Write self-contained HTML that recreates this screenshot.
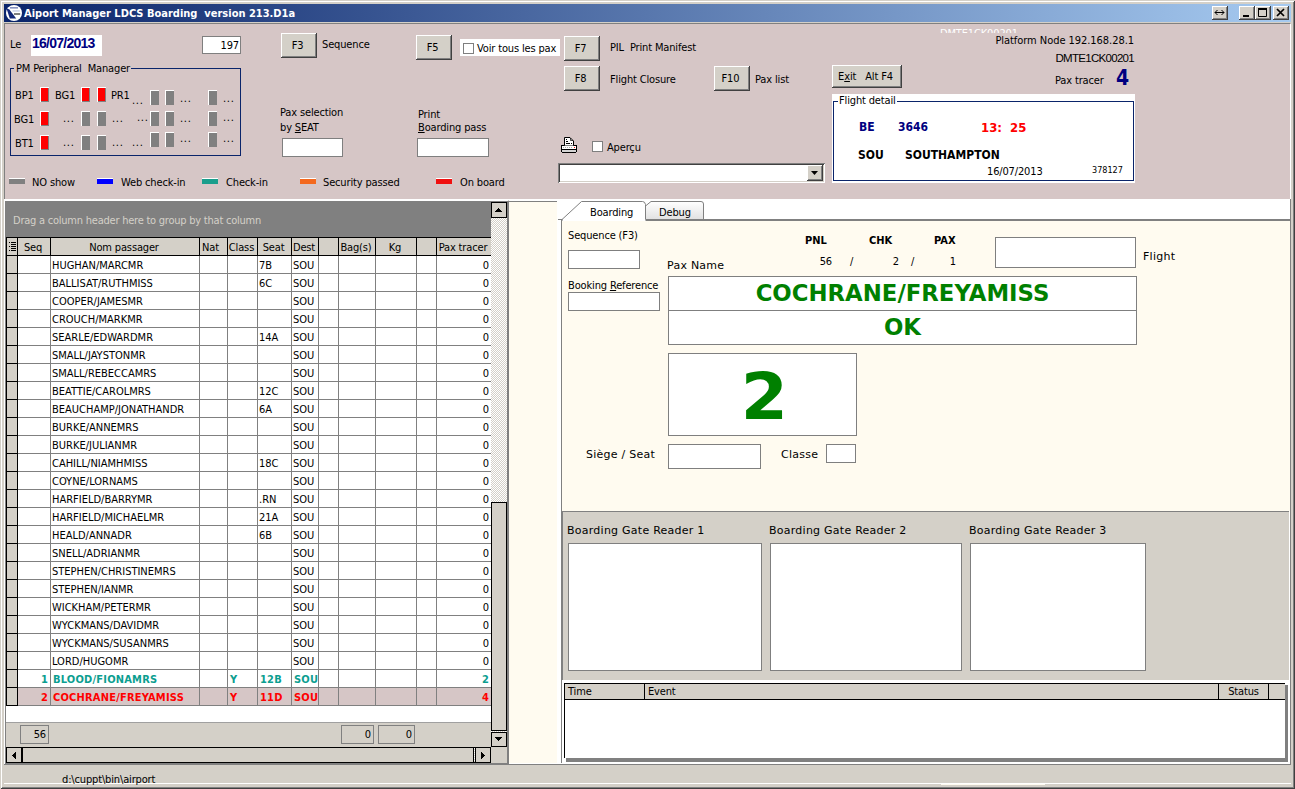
<!DOCTYPE html>
<html lang="fr">
<head>
<meta charset="utf-8">
<title>Aiport Manager LDCS Boarding version 213.D1a</title>
<style>
html,body{margin:0;padding:0;background:#d4d0c8}
#win{position:relative;width:1295px;height:789px;overflow:hidden;background:#d4d0c8;font:11px "DejaVu Sans Condensed","Liberation Sans",sans-serif;color:#000;letter-spacing:-0.15px;
 box-shadow:inset 1px 1px 0 #d4d0c8,inset -1px -1px 0 #404040,inset 2px 2px 0 #fff,inset -2px -2px 0 #808080}
#win div,#win span,#win i,#win b,#win svg{position:absolute;box-sizing:border-box;white-space:pre}
/* title bar */
#tb{left:4px;top:4px;width:1287px;height:18px;background:linear-gradient(90deg,#0a246a,#a6caf0)}
#tb .t{left:20px;top:3px;color:#fff;font:bold 11px "DejaVu Sans Condensed","Liberation Sans",sans-serif;letter-spacing:0}
.cb{top:2px;width:16px;height:14px;background:#d4d0c8;box-shadow:inset -1px -1px 0 #404040,inset 1px 1px 0 #fff,inset -2px -2px 0 #808080}
/* pink top panel */
#tp{left:4px;top:23px;width:1287px;height:177px;background:#d6c6c6;border:1px solid;border-color:#808080 #fff #fff #808080}
.btn{background:#d4d0c8;box-shadow:inset -1px -1px 0 #404040,inset 1px 1px 0 #fff,inset -2px -2px 0 #808080;text-align:center;padding:1px 3px 0 0}
.inp{background:#fff;border:1px solid #7f7f7f}
.lbl{line-height:13px}
u{text-decoration:underline}
.led{width:9px;height:15px;background:#808080;box-shadow:inset 1px 1px 0 #fff,inset -1px -1px 0 #808080}
.led.r{background:#f00}
.dots{line-height:13px;letter-spacing:0.7px}
.lg{width:16px;height:6px;box-shadow:inset 0 1px 0 #fff}
/* grid */
#grid{left:4px;top:199px;width:504px;height:565px;background:#fff}
#gp{left:5px;top:201px;width:486px;height:36px;background:#808080;color:#d4d0c8;padding:13px 0 0 8px;letter-spacing:-0.23px}
.hc{top:237px;height:19px;background:#d4d0c8;border-top:1px solid #000;border-bottom:1px solid #000;border-right:1px solid #000;text-align:center;line-height:17px;padding:1px 2px 0 0}
.hc.first{border-left:1px solid #000}
.hc.last{border-right:0}
.row{left:6px;width:485px;height:18px}
.row .c{top:0;height:18px;border-right:1px solid #808080;border-bottom:1px solid #808080;line-height:17px;padding:1px 0 0 1px;overflow:hidden;letter-spacing:0}
.row .c.r{text-align:right;padding:1px 2px 0 0}
.row .c.nl{border-right:0}
.row .ind{top:-1px;height:19px;background:#d4d0c8;border:1px solid #000}
.row.teal .c{color:#0c9e90;font-weight:bold;letter-spacing:0.2px;padding-left:2px}
.row.red .c{color:#f00;font-weight:bold;background:#d6c6c6;letter-spacing:0.2px;padding-left:2px}
.ft{height:19px;border:1px solid #808080;background:#d4d0c8;text-align:right;line-height:18px;padding-right:2px}
.trk{background:#e9e7e3 conic-gradient(#fff 25%,#d4d0c8 0 50%,#fff 0 75%,#d4d0c8 0) 0 0/2px 2px}
.sb{background:#d4d0c8;border:1px solid #000}
.vd{font:11px "DejaVu Sans","Liberation Sans",sans-serif;letter-spacing:0.25px;line-height:13px;margin-top:1px}
.big{color:#008000;font:bold 22.8px "DejaVu Sans","Liberation Sans",sans-serif;text-align:center;letter-spacing:0}
.lh{top:684px;height:16px;background:#d4d0c8;border-right:1px solid #000;border-bottom:1px solid #000;line-height:16px;padding-left:3px}

</style>
</head>
<body>
<div id="win">
<!-- title bar -->
<div id="tb">
<svg width="16" height="16" viewBox="0 0 16 16" style="left:2px;top:1px"><circle cx="8" cy="8" r="8" fill="#fff"/><path d="M0.600 3.800L3.200 4.300L10.200 13.600L3.800 13.400Z" fill="#14287a"/><rect x="4" y="2.200" width="8" height="1.300" fill="#6a78b0"/><rect x="6.500" y="5.300" width="7.300" height="1.300" fill="#c4cbe4"/><rect x="8" y="8.200" width="6.200" height="1.600" fill="#606060"/></svg>
<span class="t">Aiport Manager LDCS Boarding  version 213.D1a</span>
<div class="cb" style="left:1208px"><svg width="16" height="14" viewBox="0 0 16 14" style="left:0;top:0"><path d="M3 6.5h9M3 6.5l2.5-2.5M3 6.5l2.5 2.5M12 6.5l-2.5-2.5M12 6.5l-2.5 2.5" stroke="#000" stroke-width="1" fill="none"/></svg></div>
<div class="cb" style="left:1235px"><svg width="16" height="14" viewBox="0 0 16 14" style="left:0;top:0"><rect x="4" y="9" width="6" height="2" fill="#000"/></svg></div>
<div class="cb" style="left:1251px"><svg width="16" height="14" viewBox="0 0 16 14" style="left:0;top:0"><path d="M3.500 2.500h8v8h-8z" stroke="#000" stroke-width="1" fill="none"/><rect x="3" y="2" width="9" height="2" fill="#000"/></svg></div>
<div class="cb" style="left:1269px"><svg width="16" height="14" viewBox="0 0 16 14" style="left:0;top:0"><path d="M4 3l7 7M11 3l-7 7" stroke="#000" stroke-width="1.7" fill="none"/></svg></div>
</div>
<!-- top pink panel -->
<div id="tp"></div>
<span class="lbl" style="left:10px;top:38px">Le</span>
<div style="left:31px;top:35px;width:71px;height:21px;background:#fff;color:#000080;font:bold 14px 'Liberation Sans',sans-serif;letter-spacing:-0.75px;line-height:16px;padding-left:1px">16/07/2013</div>
<div class="inp" style="left:202px;top:36px;width:39px;height:18px;text-align:right;line-height:17px;padding-right:1px">197</div>
<div class="btn" style="left:281px;top:33px;width:36px;height:25px;line-height:23px">F3</div>
<span class="lbl" style="left:322px;top:38px">Sequence</span>
<div class="btn" style="left:416px;top:35px;width:36px;height:25px;line-height:23px">F5</div>
<div style="left:460px;top:39px;width:100px;height:17px;background:#fff"><i style="left:3px;top:4px;width:11px;height:11px;border:1px solid #7f7f7f;background:#fff"></i><span style="left:17px;top:3px" class="lbl">Voir tous les pax</span></div>
<div class="btn" style="left:564px;top:36px;width:36px;height:25px;line-height:23px">F7</div>
<span class="lbl" style="left:610px;top:41px">PIL  Print Manifest</span>
<div class="btn" style="left:564px;top:66px;width:36px;height:25px;line-height:23px">F8</div>
<span class="lbl" style="left:610px;top:73px">Flight Closure</span>
<div class="btn" style="left:714px;top:66px;width:36px;height:25px;line-height:23px">F10</div>
<span class="lbl" style="left:755px;top:73px">Pax list</span>
<div class="btn" style="left:832px;top:65px;width:70px;height:23px;line-height:21px">E<u>x</u>it   Alt F4</div>
<span class="lbl" style="left:940px;top:24px;height:9px;overflow:hidden;color:#fff;width:90px"><span style="top:3px;left:0">DMTE1CK00201</span></span>
<span class="lbl" style="right:161px;top:34px;letter-spacing:-0.05px">Platform Node 192.168.28.1</span>
<span class="lbl" style="right:161px;top:52px;font:11.5px 'Liberation Sans',sans-serif;letter-spacing:-0.7px">DMTE1CK00201</span>
<span class="lbl" style="left:1055px;top:74px">Pax tracer</span>
<span style="left:1116px;top:66px;font:bold 21px 'DejaVu Sans Condensed',sans-serif;color:#000080;letter-spacing:0">4</span>
<!-- PM Peripheral Manager group -->
<div style="left:10px;top:68px;width:231px;height:88px;border:1px solid #0a246a"></div>
<span class="lbl" style="left:14px;top:62px;background:#d6c6c6;padding:0 1px 0 2px">PM Peripheral  Manager</span>
<span class="lbl" style="left:15px;top:89px">BP1</span>
<i class="led r" style="left:40px;top:87px"></i>
<span class="lbl" style="left:55px;top:89px">BG1</span>
<i class="led r" style="left:81px;top:87px"></i>
<i class="led r" style="left:97px;top:87px"></i>
<span class="lbl" style="left:111px;top:89px">PR1</span>
<span class="lbl" style="left:14px;top:113px">BG1</span>
<i class="led r" style="left:40px;top:111px"></i>
<span class="dots" style="left:63px;top:112px">...</span>
<i class="led" style="left:81px;top:111px"></i>
<i class="led" style="left:97px;top:111px"></i>
<span class="dots" style="left:112px;top:112px">...</span>
<span class="lbl" style="left:15px;top:137px">BT1</span>
<i class="led r" style="left:40px;top:135px"></i>
<span class="dots" style="left:63px;top:136px">...</span>
<i class="led" style="left:81px;top:135px"></i>
<i class="led" style="left:97px;top:135px"></i>
<span class="dots" style="left:112px;top:136px">...</span>
<span class="dots" style="left:132px;top:94px">...</span>
<i class="led" style="left:150px;top:90px"></i>
<i class="led" style="left:165px;top:90px"></i>
<span class="dots" style="left:180px;top:92px">...</span>
<i class="led" style="left:208px;top:90px"></i>
<span class="dots" style="left:223px;top:92px">...</span>
<span class="dots" style="left:137px;top:111px">...</span>
<i class="led" style="left:150px;top:111px"></i>
<i class="led" style="left:165px;top:111px"></i>
<span class="dots" style="left:180px;top:112px">...</span>
<i class="led" style="left:208px;top:111px"></i>
<span class="dots" style="left:223px;top:111px">...</span>
<span class="dots" style="left:132px;top:136px">...</span>
<i class="led" style="left:150px;top:132px"></i>
<i class="led" style="left:165px;top:132px"></i>
<span class="dots" style="left:180px;top:132px">...</span>
<i class="led" style="left:208px;top:132px"></i>
<span class="dots" style="left:223px;top:132px">...</span>
<!-- selectors -->
<span class="lbl" style="left:280px;top:106px">Pax selection</span>
<span class="lbl" style="left:280px;top:121px">by <u>S</u>EAT</span>
<div class="inp" style="left:282px;top:138px;width:61px;height:19px"></div>
<span class="lbl" style="left:418px;top:108px">Print</span>
<span class="lbl" style="left:418px;top:121px"><u>B</u>oarding pass</span>
<div class="inp" style="left:417px;top:138px;width:72px;height:19px"></div>
<svg width="16" height="16" viewBox="0 0 16 16" style="left:561px;top:137px"><rect x="0" y="8" width="16" height="7" fill="#000"/><rect x="1" y="9" width="14" height="3" fill="#fff"/><rect x="1" y="13" width="14" height="2" fill="#d4d4d4"/><rect x="1" y="15" width="14" height="1" fill="#000"/><path d="M2 10.500h10" stroke="#b0b0b0" stroke-dasharray="1 1"/><rect x="13" y="10" width="1" height="1" fill="#f00"/><path d="M3.500 8.500V0.500H9L12.500 4V8.500" fill="#fff" stroke="#000"/><path d="M9.500 1V3.500H12" fill="none" stroke="#000" stroke-width="0.700"/><path d="M5 2.500h1M5 4.500h2M5 6.500h4M10 6.500h1" stroke="#000"/></svg>
<i style="left:592px;top:141px;width:11px;height:11px;border:1px solid #7f7f7f;background:#fff"></i>
<span class="lbl" style="left:607px;top:141px">Aperçu</span>
<div style="left:558px;top:163px;width:267px;height:20px;background:#fff;box-shadow:inset 1px 1px 0 #808080,inset -1px -1px 0 #fff,inset 2px 2px 0 #404040,inset -2px -2px 0 #d4d0c8"><div class="btn" style="left:249px;top:2px;width:16px;height:16px"><svg width="16" height="16" viewBox="0 0 16 16" style="left:0;top:0"><path d="M4 6h7l-3.5 4z" fill="#000"/></svg></div></div>
<!-- legend -->
<i class="lg" style="left:9px;top:178px;background:#808080"></i><span class="lbl" style="left:32px;top:176px">NO show</span>
<i class="lg" style="left:97px;top:178px;background:#0000ff"></i><span class="lbl" style="left:121px;top:176px">Web check-in</span>
<i class="lg" style="left:202px;top:178px;background:#1a9e8c"></i><span class="lbl" style="left:226px;top:176px">Check-in</span>
<i class="lg" style="left:300px;top:178px;background:#f4691e"></i><span class="lbl" style="left:323px;top:176px">Security passed</span>
<i class="lg" style="left:436px;top:178px;background:#f01010"></i><span class="lbl" style="left:460px;top:176px">On board</span>
<!-- flight detail -->
<div style="left:832px;top:94px;width:303px;height:89px;background:#fff"></div>
<div style="left:833px;top:101px;width:301px;height:80px;border:1px solid #0a246a"></div>
<span class="lbl" style="left:838px;top:94px;background:#fff;padding:0 1px">Flight detail</span>
<b style="left:859px;top:120px;color:#000080;font-size:12px;letter-spacing:0">BE</b>
<b style="left:898px;top:120px;color:#000080;font-size:12px;letter-spacing:0">3646</b>
<b style="left:981px;top:120px;color:#f00;font-size:13px;letter-spacing:0">13:  25</b>
<b style="left:858px;top:148px;font-size:12px;letter-spacing:0">SOU</b>
<b style="left:905px;top:148px;font-size:12px;letter-spacing:0">SOUTHAMPTON</b>
<span class="lbl" style="left:987px;top:165px">16/07/2013</span>
<span class="lbl" style="left:1092px;top:164px;font-size:9px;letter-spacing:0">378127</span>

<!-- passenger grid -->
<div id="grid"></div>
<div id="gp">Drag a column header here to group by that column</div>
<div class="hc first" style="left:6px;width:12px"><svg width="7" height="9" viewBox="0 0 7 9" style="left:2px;top:4px"><path d="M0 0h1v1H0zM0 4h1v1H0zM0 8h1v1H0zM2 0h5v1H2zM2 2h5v1H2zM2 4h5v1H2zM2 6h5v1H2zM2 8h5v1H2z" fill="#000"/></svg></div>
<div class="hc" style="left:18px;width:33px">Seq</div>
<div class="hc" style="left:51px;width:149px">Nom passager</div>
<div class="hc" style="left:200px;width:28px;text-align:left;padding-left:2px">Nat</div>
<div class="hc" style="left:228px;width:30px">Class</div>
<div class="hc" style="left:258px;width:34px">Seat</div>
<div class="hc" style="left:292px;width:27px">Dest</div>
<div class="hc" style="left:319px;width:20px"></div>
<div class="hc" style="left:339px;width:37px">Bag(s)</div>
<div class="hc" style="left:376px;width:41px">Kg</div>
<div class="hc" style="left:417px;width:20px"></div>
<div class="hc last" style="left:437px;width:54px">Pax tracer</div>
<div class="row" style="top:256px">
<i class="ind" style="left:0px;width:12px"></i>
<span class="c r" style="left:12px;width:33px"></span>
<span class="c" style="left:45px;width:149px">HUGHAN/MARCMR</span>
<span class="c" style="left:194px;width:28px"></span>
<span class="c" style="left:222px;width:30px"></span>
<span class="c" style="left:252px;width:34px">7B</span>
<span class="c" style="left:286px;width:27px">SOU</span>
<span class="c" style="left:313px;width:20px"></span>
<span class="c" style="left:333px;width:37px"></span>
<span class="c" style="left:370px;width:41px"></span>
<span class="c" style="left:411px;width:20px"></span>
<span class="c r nl" style="left:431px;width:54px">0</span>
</div>
<div class="row" style="top:274px">
<i class="ind" style="left:0px;width:12px"></i>
<span class="c r" style="left:12px;width:33px"></span>
<span class="c" style="left:45px;width:149px">BALLISAT/RUTHMISS</span>
<span class="c" style="left:194px;width:28px"></span>
<span class="c" style="left:222px;width:30px"></span>
<span class="c" style="left:252px;width:34px">6C</span>
<span class="c" style="left:286px;width:27px">SOU</span>
<span class="c" style="left:313px;width:20px"></span>
<span class="c" style="left:333px;width:37px"></span>
<span class="c" style="left:370px;width:41px"></span>
<span class="c" style="left:411px;width:20px"></span>
<span class="c r nl" style="left:431px;width:54px">0</span>
</div>
<div class="row" style="top:292px">
<i class="ind" style="left:0px;width:12px"></i>
<span class="c r" style="left:12px;width:33px"></span>
<span class="c" style="left:45px;width:149px">COOPER/JAMESMR</span>
<span class="c" style="left:194px;width:28px"></span>
<span class="c" style="left:222px;width:30px"></span>
<span class="c" style="left:252px;width:34px"></span>
<span class="c" style="left:286px;width:27px">SOU</span>
<span class="c" style="left:313px;width:20px"></span>
<span class="c" style="left:333px;width:37px"></span>
<span class="c" style="left:370px;width:41px"></span>
<span class="c" style="left:411px;width:20px"></span>
<span class="c r nl" style="left:431px;width:54px">0</span>
</div>
<div class="row" style="top:310px">
<i class="ind" style="left:0px;width:12px"></i>
<span class="c r" style="left:12px;width:33px"></span>
<span class="c" style="left:45px;width:149px">CROUCH/MARKMR</span>
<span class="c" style="left:194px;width:28px"></span>
<span class="c" style="left:222px;width:30px"></span>
<span class="c" style="left:252px;width:34px"></span>
<span class="c" style="left:286px;width:27px">SOU</span>
<span class="c" style="left:313px;width:20px"></span>
<span class="c" style="left:333px;width:37px"></span>
<span class="c" style="left:370px;width:41px"></span>
<span class="c" style="left:411px;width:20px"></span>
<span class="c r nl" style="left:431px;width:54px">0</span>
</div>
<div class="row" style="top:328px">
<i class="ind" style="left:0px;width:12px"></i>
<span class="c r" style="left:12px;width:33px"></span>
<span class="c" style="left:45px;width:149px">SEARLE/EDWARDMR</span>
<span class="c" style="left:194px;width:28px"></span>
<span class="c" style="left:222px;width:30px"></span>
<span class="c" style="left:252px;width:34px">14A</span>
<span class="c" style="left:286px;width:27px">SOU</span>
<span class="c" style="left:313px;width:20px"></span>
<span class="c" style="left:333px;width:37px"></span>
<span class="c" style="left:370px;width:41px"></span>
<span class="c" style="left:411px;width:20px"></span>
<span class="c r nl" style="left:431px;width:54px">0</span>
</div>
<div class="row" style="top:346px">
<i class="ind" style="left:0px;width:12px"></i>
<span class="c r" style="left:12px;width:33px"></span>
<span class="c" style="left:45px;width:149px">SMALL/JAYSTONMR</span>
<span class="c" style="left:194px;width:28px"></span>
<span class="c" style="left:222px;width:30px"></span>
<span class="c" style="left:252px;width:34px"></span>
<span class="c" style="left:286px;width:27px">SOU</span>
<span class="c" style="left:313px;width:20px"></span>
<span class="c" style="left:333px;width:37px"></span>
<span class="c" style="left:370px;width:41px"></span>
<span class="c" style="left:411px;width:20px"></span>
<span class="c r nl" style="left:431px;width:54px">0</span>
</div>
<div class="row" style="top:364px">
<i class="ind" style="left:0px;width:12px"></i>
<span class="c r" style="left:12px;width:33px"></span>
<span class="c" style="left:45px;width:149px">SMALL/REBECCAMRS</span>
<span class="c" style="left:194px;width:28px"></span>
<span class="c" style="left:222px;width:30px"></span>
<span class="c" style="left:252px;width:34px"></span>
<span class="c" style="left:286px;width:27px">SOU</span>
<span class="c" style="left:313px;width:20px"></span>
<span class="c" style="left:333px;width:37px"></span>
<span class="c" style="left:370px;width:41px"></span>
<span class="c" style="left:411px;width:20px"></span>
<span class="c r nl" style="left:431px;width:54px">0</span>
</div>
<div class="row" style="top:382px">
<i class="ind" style="left:0px;width:12px"></i>
<span class="c r" style="left:12px;width:33px"></span>
<span class="c" style="left:45px;width:149px">BEATTIE/CAROLMRS</span>
<span class="c" style="left:194px;width:28px"></span>
<span class="c" style="left:222px;width:30px"></span>
<span class="c" style="left:252px;width:34px">12C</span>
<span class="c" style="left:286px;width:27px">SOU</span>
<span class="c" style="left:313px;width:20px"></span>
<span class="c" style="left:333px;width:37px"></span>
<span class="c" style="left:370px;width:41px"></span>
<span class="c" style="left:411px;width:20px"></span>
<span class="c r nl" style="left:431px;width:54px">0</span>
</div>
<div class="row" style="top:400px">
<i class="ind" style="left:0px;width:12px"></i>
<span class="c r" style="left:12px;width:33px"></span>
<span class="c" style="left:45px;width:149px">BEAUCHAMP/JONATHANDR</span>
<span class="c" style="left:194px;width:28px"></span>
<span class="c" style="left:222px;width:30px"></span>
<span class="c" style="left:252px;width:34px">6A</span>
<span class="c" style="left:286px;width:27px">SOU</span>
<span class="c" style="left:313px;width:20px"></span>
<span class="c" style="left:333px;width:37px"></span>
<span class="c" style="left:370px;width:41px"></span>
<span class="c" style="left:411px;width:20px"></span>
<span class="c r nl" style="left:431px;width:54px">0</span>
</div>
<div class="row" style="top:418px">
<i class="ind" style="left:0px;width:12px"></i>
<span class="c r" style="left:12px;width:33px"></span>
<span class="c" style="left:45px;width:149px">BURKE/ANNEMRS</span>
<span class="c" style="left:194px;width:28px"></span>
<span class="c" style="left:222px;width:30px"></span>
<span class="c" style="left:252px;width:34px"></span>
<span class="c" style="left:286px;width:27px">SOU</span>
<span class="c" style="left:313px;width:20px"></span>
<span class="c" style="left:333px;width:37px"></span>
<span class="c" style="left:370px;width:41px"></span>
<span class="c" style="left:411px;width:20px"></span>
<span class="c r nl" style="left:431px;width:54px">0</span>
</div>
<div class="row" style="top:436px">
<i class="ind" style="left:0px;width:12px"></i>
<span class="c r" style="left:12px;width:33px"></span>
<span class="c" style="left:45px;width:149px">BURKE/JULIANMR</span>
<span class="c" style="left:194px;width:28px"></span>
<span class="c" style="left:222px;width:30px"></span>
<span class="c" style="left:252px;width:34px"></span>
<span class="c" style="left:286px;width:27px">SOU</span>
<span class="c" style="left:313px;width:20px"></span>
<span class="c" style="left:333px;width:37px"></span>
<span class="c" style="left:370px;width:41px"></span>
<span class="c" style="left:411px;width:20px"></span>
<span class="c r nl" style="left:431px;width:54px">0</span>
</div>
<div class="row" style="top:454px">
<i class="ind" style="left:0px;width:12px"></i>
<span class="c r" style="left:12px;width:33px"></span>
<span class="c" style="left:45px;width:149px">CAHILL/NIAMHMISS</span>
<span class="c" style="left:194px;width:28px"></span>
<span class="c" style="left:222px;width:30px"></span>
<span class="c" style="left:252px;width:34px">18C</span>
<span class="c" style="left:286px;width:27px">SOU</span>
<span class="c" style="left:313px;width:20px"></span>
<span class="c" style="left:333px;width:37px"></span>
<span class="c" style="left:370px;width:41px"></span>
<span class="c" style="left:411px;width:20px"></span>
<span class="c r nl" style="left:431px;width:54px">0</span>
</div>
<div class="row" style="top:472px">
<i class="ind" style="left:0px;width:12px"></i>
<span class="c r" style="left:12px;width:33px"></span>
<span class="c" style="left:45px;width:149px">COYNE/LORNAMS</span>
<span class="c" style="left:194px;width:28px"></span>
<span class="c" style="left:222px;width:30px"></span>
<span class="c" style="left:252px;width:34px"></span>
<span class="c" style="left:286px;width:27px">SOU</span>
<span class="c" style="left:313px;width:20px"></span>
<span class="c" style="left:333px;width:37px"></span>
<span class="c" style="left:370px;width:41px"></span>
<span class="c" style="left:411px;width:20px"></span>
<span class="c r nl" style="left:431px;width:54px">0</span>
</div>
<div class="row" style="top:490px">
<i class="ind" style="left:0px;width:12px"></i>
<span class="c r" style="left:12px;width:33px"></span>
<span class="c" style="left:45px;width:149px">HARFIELD/BARRYMR</span>
<span class="c" style="left:194px;width:28px"></span>
<span class="c" style="left:222px;width:30px"></span>
<span class="c" style="left:252px;width:34px">.RN</span>
<span class="c" style="left:286px;width:27px">SOU</span>
<span class="c" style="left:313px;width:20px"></span>
<span class="c" style="left:333px;width:37px"></span>
<span class="c" style="left:370px;width:41px"></span>
<span class="c" style="left:411px;width:20px"></span>
<span class="c r nl" style="left:431px;width:54px">0</span>
</div>
<div class="row" style="top:508px">
<i class="ind" style="left:0px;width:12px"></i>
<span class="c r" style="left:12px;width:33px"></span>
<span class="c" style="left:45px;width:149px">HARFIELD/MICHAELMR</span>
<span class="c" style="left:194px;width:28px"></span>
<span class="c" style="left:222px;width:30px"></span>
<span class="c" style="left:252px;width:34px">21A</span>
<span class="c" style="left:286px;width:27px">SOU</span>
<span class="c" style="left:313px;width:20px"></span>
<span class="c" style="left:333px;width:37px"></span>
<span class="c" style="left:370px;width:41px"></span>
<span class="c" style="left:411px;width:20px"></span>
<span class="c r nl" style="left:431px;width:54px">0</span>
</div>
<div class="row" style="top:526px">
<i class="ind" style="left:0px;width:12px"></i>
<span class="c r" style="left:12px;width:33px"></span>
<span class="c" style="left:45px;width:149px">HEALD/ANNADR</span>
<span class="c" style="left:194px;width:28px"></span>
<span class="c" style="left:222px;width:30px"></span>
<span class="c" style="left:252px;width:34px">6B</span>
<span class="c" style="left:286px;width:27px">SOU</span>
<span class="c" style="left:313px;width:20px"></span>
<span class="c" style="left:333px;width:37px"></span>
<span class="c" style="left:370px;width:41px"></span>
<span class="c" style="left:411px;width:20px"></span>
<span class="c r nl" style="left:431px;width:54px">0</span>
</div>
<div class="row" style="top:544px">
<i class="ind" style="left:0px;width:12px"></i>
<span class="c r" style="left:12px;width:33px"></span>
<span class="c" style="left:45px;width:149px">SNELL/ADRIANMR</span>
<span class="c" style="left:194px;width:28px"></span>
<span class="c" style="left:222px;width:30px"></span>
<span class="c" style="left:252px;width:34px"></span>
<span class="c" style="left:286px;width:27px">SOU</span>
<span class="c" style="left:313px;width:20px"></span>
<span class="c" style="left:333px;width:37px"></span>
<span class="c" style="left:370px;width:41px"></span>
<span class="c" style="left:411px;width:20px"></span>
<span class="c r nl" style="left:431px;width:54px">0</span>
</div>
<div class="row" style="top:562px">
<i class="ind" style="left:0px;width:12px"></i>
<span class="c r" style="left:12px;width:33px"></span>
<span class="c" style="left:45px;width:149px">STEPHEN/CHRISTINEMRS</span>
<span class="c" style="left:194px;width:28px"></span>
<span class="c" style="left:222px;width:30px"></span>
<span class="c" style="left:252px;width:34px"></span>
<span class="c" style="left:286px;width:27px">SOU</span>
<span class="c" style="left:313px;width:20px"></span>
<span class="c" style="left:333px;width:37px"></span>
<span class="c" style="left:370px;width:41px"></span>
<span class="c" style="left:411px;width:20px"></span>
<span class="c r nl" style="left:431px;width:54px">0</span>
</div>
<div class="row" style="top:580px">
<i class="ind" style="left:0px;width:12px"></i>
<span class="c r" style="left:12px;width:33px"></span>
<span class="c" style="left:45px;width:149px">STEPHEN/IANMR</span>
<span class="c" style="left:194px;width:28px"></span>
<span class="c" style="left:222px;width:30px"></span>
<span class="c" style="left:252px;width:34px"></span>
<span class="c" style="left:286px;width:27px">SOU</span>
<span class="c" style="left:313px;width:20px"></span>
<span class="c" style="left:333px;width:37px"></span>
<span class="c" style="left:370px;width:41px"></span>
<span class="c" style="left:411px;width:20px"></span>
<span class="c r nl" style="left:431px;width:54px">0</span>
</div>
<div class="row" style="top:598px">
<i class="ind" style="left:0px;width:12px"></i>
<span class="c r" style="left:12px;width:33px"></span>
<span class="c" style="left:45px;width:149px">WICKHAM/PETERMR</span>
<span class="c" style="left:194px;width:28px"></span>
<span class="c" style="left:222px;width:30px"></span>
<span class="c" style="left:252px;width:34px"></span>
<span class="c" style="left:286px;width:27px">SOU</span>
<span class="c" style="left:313px;width:20px"></span>
<span class="c" style="left:333px;width:37px"></span>
<span class="c" style="left:370px;width:41px"></span>
<span class="c" style="left:411px;width:20px"></span>
<span class="c r nl" style="left:431px;width:54px">0</span>
</div>
<div class="row" style="top:616px">
<i class="ind" style="left:0px;width:12px"></i>
<span class="c r" style="left:12px;width:33px"></span>
<span class="c" style="left:45px;width:149px">WYCKMANS/DAVIDMR</span>
<span class="c" style="left:194px;width:28px"></span>
<span class="c" style="left:222px;width:30px"></span>
<span class="c" style="left:252px;width:34px"></span>
<span class="c" style="left:286px;width:27px">SOU</span>
<span class="c" style="left:313px;width:20px"></span>
<span class="c" style="left:333px;width:37px"></span>
<span class="c" style="left:370px;width:41px"></span>
<span class="c" style="left:411px;width:20px"></span>
<span class="c r nl" style="left:431px;width:54px">0</span>
</div>
<div class="row" style="top:634px">
<i class="ind" style="left:0px;width:12px"></i>
<span class="c r" style="left:12px;width:33px"></span>
<span class="c" style="left:45px;width:149px">WYCKMANS/SUSANMRS</span>
<span class="c" style="left:194px;width:28px"></span>
<span class="c" style="left:222px;width:30px"></span>
<span class="c" style="left:252px;width:34px"></span>
<span class="c" style="left:286px;width:27px">SOU</span>
<span class="c" style="left:313px;width:20px"></span>
<span class="c" style="left:333px;width:37px"></span>
<span class="c" style="left:370px;width:41px"></span>
<span class="c" style="left:411px;width:20px"></span>
<span class="c r nl" style="left:431px;width:54px">0</span>
</div>
<div class="row" style="top:652px">
<i class="ind" style="left:0px;width:12px"></i>
<span class="c r" style="left:12px;width:33px"></span>
<span class="c" style="left:45px;width:149px">LORD/HUGOMR</span>
<span class="c" style="left:194px;width:28px"></span>
<span class="c" style="left:222px;width:30px"></span>
<span class="c" style="left:252px;width:34px"></span>
<span class="c" style="left:286px;width:27px">SOU</span>
<span class="c" style="left:313px;width:20px"></span>
<span class="c" style="left:333px;width:37px"></span>
<span class="c" style="left:370px;width:41px"></span>
<span class="c" style="left:411px;width:20px"></span>
<span class="c r nl" style="left:431px;width:54px">0</span>
</div>
<div class="row teal" style="top:670px">
<i class="ind" style="left:0px;width:12px"></i>
<span class="c r" style="left:12px;width:33px">1</span>
<span class="c" style="left:45px;width:149px">BLOOD/FIONAMRS</span>
<span class="c" style="left:194px;width:28px"></span>
<span class="c" style="left:222px;width:30px">Y</span>
<span class="c" style="left:252px;width:34px">12B</span>
<span class="c" style="left:286px;width:27px">SOU</span>
<span class="c" style="left:313px;width:20px"></span>
<span class="c" style="left:333px;width:37px"></span>
<span class="c" style="left:370px;width:41px"></span>
<span class="c" style="left:411px;width:20px"></span>
<span class="c r nl" style="left:431px;width:54px">2</span>
</div>
<div class="row red" style="top:688px">
<i class="ind" style="left:0px;width:12px"></i>
<span class="c r" style="left:12px;width:33px">2</span>
<span class="c" style="left:45px;width:149px">COCHRANE/FREYAMISS</span>
<span class="c" style="left:194px;width:28px"></span>
<span class="c" style="left:222px;width:30px">Y</span>
<span class="c" style="left:252px;width:34px">11D</span>
<span class="c" style="left:286px;width:27px">SOU</span>
<span class="c" style="left:313px;width:20px"></span>
<span class="c" style="left:333px;width:37px"></span>
<span class="c" style="left:370px;width:41px"></span>
<span class="c" style="left:411px;width:20px"></span>
<span class="c r nl" style="left:431px;width:54px">4</span>
</div>
<!-- grid footer, scrollbars -->
<div style="left:5px;top:722px;width:486px;height:25px;background:#d4d0c8;border-top:1px solid #a0a0a0"></div>
<div class="ft" style="left:20px;top:725px;width:29px">56</div>
<div class="ft" style="left:341px;top:725px;width:33px">0</div>
<div class="ft" style="left:378px;top:725px;width:37px">0</div>
<!-- vertical scrollbar -->
<div class="trk" style="left:491px;top:202px;width:16px;height:545px"></div>
<div class="sb" style="left:491px;top:202px;width:16px;height:16px"><svg width="14" height="14" viewBox="0 0 14 14" style="left:0;top:0"><path d="M6 5h1v1H6zM5 6h3v1H5zM4 7h5v1H4zM3 8h7v1H3z" fill="#000"/></svg></div>
<div class="sb" style="left:491px;top:502px;width:16px;height:229px"></div>
<div class="sb" style="left:491px;top:732px;width:16px;height:15px"><svg width="14" height="13" viewBox="0 0 14 13" style="left:0;top:0"><path d="M3 4h7v1H3zM4 5h5v1H4zM5 6h3v1H5zM6 7h1v1H6z" fill="#000"/></svg></div>
<!-- horizontal scrollbar -->
<div style="left:6px;top:747px;width:485px;height:16px;background:#d4d0c8;border:1px solid #000"></div>
<svg width="14" height="14" viewBox="0 0 14 14" style="left:8px;top:749px"><path d="M4 6h1v1H4zM5 5h1v3H5zM6 4h1v5H6zM7 3h1v7H7z" fill="#000"/></svg>
<div style="left:21px;top:748px;width:2px;height:14px;background:#000"></div>
<div style="left:473px;top:748px;width:3px;height:14px;background:#000"><i style="left:1px;top:0;width:1px;height:14px;background:repeating-linear-gradient(#fff 0 1px,#d4d0c8 1px 2px)"></i></div>
<svg width="14" height="14" viewBox="0 0 14 14" style="left:476px;top:749px"><path d="M5 3h1v7H5zM6 4h1v5H6zM7 5h1v3H7zM8 6h1v1H8z" fill="#000"/></svg>
<div style="left:491px;top:747px;width:16px;height:16px;background:#d4d0c8"></div>
<div style="left:507px;top:201px;width:2px;height:563px;background:#808080"></div>
<div style="left:5px;top:763px;width:504px;height:1px;background:#808080"></div>
<div style="left:509px;top:199px;width:48px;height:564px;background:#fffbf0;border-top:2px solid #fff"></div>
<div style="left:5px;top:201px;width:552px;height:1px;background:#808080"></div>
<div style="left:5px;top:201px;width:1px;height:563px;background:#808080"></div>

<!-- right pane: tab control -->
<div style="left:557px;top:199px;width:734px;height:565px;background:#fff"></div>
<div style="left:561px;top:219px;width:730px;height:293px;background:#fffbf0;border-left:1px solid #808080;border-top:2px solid #808080"></div>
<svg width="160" height="22" viewBox="0 0 160 22" style="left:557px;top:199px">
<defs><linearGradient id="tg" x1="0" y1="0" x2="0" y2="1"><stop offset="0" stop-color="#ffffff"/><stop offset="1" stop-color="#e2e2e2"/></linearGradient></defs>
<path d="M88.500 20V7L94 2.500H144q2.500 0 2.500 2.500V20z" fill="url(#tg)"/>
<path d="M88.500 20V7L94 2.500H144q2.500 0 2.500 2.500V20" fill="none" stroke="#808080"/>
<path d="M5.500 22L5.500 20.500L24.500 2.500H85.500q2.500 0 3 3V22z" fill="#fff"/>
<path d="M1 20.500H5L24.500 2.500H85.500q2.500 0 3 3V20.500" fill="none" stroke="#808080"/>
</svg>
<span class="lbl" style="left:590px;top:206px">Boarding</span>
<span class="lbl" style="left:659px;top:206px">Debug</span>
<span class="lbl" style="left:568px;top:229px">Sequence (F3)</span>
<div class="inp" style="left:568px;top:250px;width:72px;height:19px"></div>
<span class="lbl" style="left:568px;top:279px">Booking <u>R</u>eference</span>
<div class="inp" style="left:568px;top:292px;width:92px;height:19px"></div>
<span class="vd" style="left:667px;top:258px">Pax Name</span>
<b style="left:805px;top:234px;letter-spacing:0">PNL</b>
<b style="left:869px;top:234px;letter-spacing:0">CHK</b>
<b style="left:934px;top:234px;letter-spacing:0">PAX</b>
<span class="lbl" style="left:801px;top:255px;width:31px;text-align:right">56</span>
<span class="lbl" style="left:850px;top:255px">/</span>
<span class="lbl" style="left:870px;top:255px;width:29px;text-align:right">2</span>
<span class="lbl" style="left:911px;top:255px">/</span>
<span class="lbl" style="left:930px;top:255px;width:26px;text-align:right">1</span>
<div class="inp" style="left:995px;top:237px;width:141px;height:31px"></div>
<span class="vd" style="left:1143px;top:249px">Flight</span>
<div class="inp big" style="left:668px;top:276px;width:469px;height:35px;line-height:32px">COCHRANE/FREYAMISS</div>
<div class="inp big" style="left:668px;top:310px;width:469px;height:35px;line-height:32px">OK</div>
<div class="inp big" style="left:668px;top:353px;width:189px;height:83px;font:bold 64px 'DejaVu Sans',sans-serif;line-height:87px;padding-left:3px"><span style="position:static;display:inline-block;transform:scaleX(1.06)">2</span></div>
<span class="vd" style="left:586px;top:447px">Siège / Seat</span>
<div class="inp" style="left:668px;top:444px;width:93px;height:25px"></div>
<span class="vd" style="left:781px;top:447px">Classe</span>
<div class="inp" style="left:826px;top:444px;width:30px;height:19px"></div>
<!-- gate reader panel -->
<div style="left:562px;top:511px;width:727px;height:169px;background:#d4d0c8;border-top:1px solid #808080;border-left:1px solid #808080"></div>
<span class="vd" style="left:567px;top:523px">Boarding Gate Reader 1</span>
<span class="vd" style="left:769px;top:523px">Boarding Gate Reader 2</span>
<span class="vd" style="left:969px;top:523px">Boarding Gate Reader 3</span>
<div class="inp" style="left:568px;top:543px;width:194px;height:128px"></div>
<div class="inp" style="left:770px;top:543px;width:192px;height:128px"></div>
<div class="inp" style="left:970px;top:543px;width:176px;height:128px"></div>
<!-- event list -->
<div style="left:566px;top:685px;width:722px;height:77px;background:#808080"></div>
<div style="left:564px;top:683px;width:721px;height:75px;background:#fff;border-left:1px solid #000;border-top:1px solid #000"></div>
<div class="lh" style="left:565px;width:80px">Time</div>
<div class="lh" style="left:645px;width:574px">Event</div>
<div class="lh" style="left:1219px;width:50px;text-align:center;padding:0">Status</div>
<div class="lh" style="left:1269px;width:16px;border-right:0"></div>
<div style="left:1290px;top:199px;width:1px;height:566px;background:#808080"></div>
<div style="left:561px;top:219px;width:1px;height:544px;background:#808080"></div>
<div style="left:509px;top:763px;width:781px;height:1px;background:#fff"></div>

<!-- status bar -->
<div style="left:4px;top:764px;width:1287px;height:20px;background:#d4d0c8;border-top:1px solid #808080;border-bottom:1px solid #fff"></div>
<span class="lbl" style="left:62px;top:773px">d:\cuppt\bin\airport</span>
<div style="left:941px;top:784px;width:104px;height:1px;background:#fffbf0"></div>

</div>
</body>
</html>
